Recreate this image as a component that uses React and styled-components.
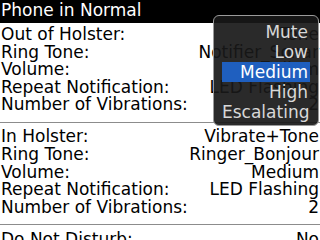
import React from 'react'
import styled, { createGlobalStyle } from 'styled-components'

const GlobalStyle = createGlobalStyle`
  html, body {
    margin: 0;
    padding: 0;
    background: #fff;
  }
`

const sections = [
  [
    ['Out of Holster:', 'Tone'],
    ['Ring Tone:', 'Notifier_Sonar'],
    ['Volume:', 'Medium'],
    ['Repeat Notification:', 'LED Flashing'],
    ['Number of Vibrations:', '2'],
  ],
  [
    ['In Holster:', 'Vibrate+Tone'],
    ['Ring Tone:', 'Ringer_Bonjour'],
    ['Volume:', 'Medium'],
    ['Repeat Notification:', 'LED Flashing'],
    ['Number of Vibrations:', '2'],
  ],
  [
    ['Do Not Disturb:', 'No'],
  ],
]

const levels = ['Mute', 'Low', 'Medium', 'High', 'Escalating']

const App = () => (
  <>
    <GlobalStyle />
    <Screen>
      <TitleBar>Phone in Normal</TitleBar>
      {sections.map((rows, i) => (
        <Section key={i} first={i === 0}>
          {rows.map(([label, value]) => (
            <Row key={label}>
              <span>{label}</span>
              <Value>{value}</Value>
            </Row>
          ))}
        </Section>
      ))}
      <Menu>
        {levels.map(level => (
          <MenuItem key={level} selected={level === 'Medium'}>{level}</MenuItem>
        ))}
      </Menu>
    </Screen>
  </>
)

const Screen = styled.div`
  position: relative;
  width: 320px;
  height: 240px;
  overflow: hidden;
  background: #fff;
  color: #000;
  font-family: "DejaVu Sans", "Liberation Sans", sans-serif;
  font-size: 17px;
`

const TitleBar = styled.div`
  height: 23px;
  line-height: 20px;
  padding-left: 1px;
  background: #000;
  color: #fff;
  white-space: nowrap;
`

const Section = styled.div`
  border-top: ${p => (p.first ? 'none' : '1px solid #8c8c8c')};
  padding: ${p => (p.first ? '3px' : '5.5px')} 1px 8px 1px;
`

const Row = styled.div`
  display: flex;
  justify-content: space-between;
  height: 17.6px;
  line-height: 17.6px;
  white-space: nowrap;
`

const Value = styled.span`
  text-align: right;
`

const Menu = styled.div`
  position: absolute;
  top: 15px;
  left: 213px;
  width: 106px;
  box-sizing: border-box;
  padding: 6px 8px 3px 8px;
  border: 1px solid #9a9a9a;
  border-radius: 6px;
  background: rgba(24, 24, 24, 0.92);
`

const MenuItem = styled.div`
  height: 20px;
  line-height: 20px;
  padding-right: 2px;
  text-align: right;
  color: ${p => (p.selected ? '#fff' : '#d8d8d8')};
  background: ${p => (p.selected ? '#1f5fbf' : 'transparent')};
`

export default App
